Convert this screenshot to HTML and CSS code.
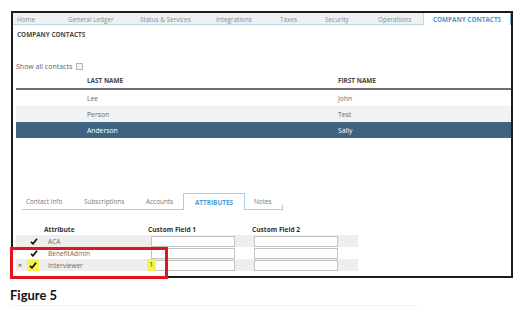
FILE: index.html
```html
<!DOCTYPE html>
<html>
  <head>
    <link rel="stylesheet" href="styles.css">
  </head>
  <body>
    <div class="page">
      <div class="frame">
        <div class="topnav">
          <span class="nav-item">Home</span>
          <span class="nav-item">General Ledger</span>
          <span class="nav-item">Status &amp; Services</span>
          <span class="nav-item">Integrations</span>
          <span class="nav-item">Taxes</span>
          <span class="nav-item">Security</span>
          <span class="nav-item">Operations</span>
          <span class="nav-item active">COMPANY CONTACTS</span>
        </div>

        <div class="page-title">COMPANY CONTACTS</div>

        <label class="show-all">Show all contacts <span class="checkbox"></span></label>

        <div class="contacts">
          <div class="c-row c-head">
            <span></span>
            <span>LAST NAME</span>
            <span>FIRST NAME</span>
          </div>
          <div class="c-row">
            <span></span>
            <span>Lee</span>
            <span>John</span>
          </div>
          <div class="c-row alt">
            <span></span>
            <span>Person</span>
            <span>Test</span>
          </div>
          <div class="c-row selected">
            <span></span>
            <span>Anderson</span>
            <span>Sally</span>
          </div>
        </div>

        <div class="subtabs">
          <span class="subtab w1">Contact Info</span>
          <span class="subtab w2">Subscriptions</span>
          <span class="subtab w3">Accounts</span>
          <span class="subtab active">ATTRIBUTES</span>
          <span class="subtab notes">Notes</span>
        </div>

        <div class="attrs">
          <div class="a-row a-head">
            <span></span>
            <span></span>
            <span class="a-name">Attribute</span>
            <span class="a-field">Custom Field 1</span>
            <span class="a-field">Custom Field 2</span>
          </div>
          <div class="a-row alt">
            <span></span>
            <span class="check"><svg width="8" height="7" viewBox="0 0 8 7"><path d="M1 3.8 L3 5.8 L7 0.8" fill="none" stroke="#111" stroke-width="1.7"/></svg></span>
            <span class="a-name">ACA</span>
            <span class="a-cell"><span class="input"></span></span>
            <span class="a-cell"><span class="input"></span></span>
          </div>
          <div class="a-row">
            <span></span>
            <span class="check"><svg width="8" height="7" viewBox="0 0 8 7"><path d="M1 3.8 L3 5.8 L7 0.8" fill="none" stroke="#111" stroke-width="1.7"/></svg></span>
            <span class="a-name">BenefitAdmin</span>
            <span class="a-cell"><span class="input"></span></span>
            <span class="a-cell"><span class="input"></span></span>
          </div>
          <div class="a-row alt">
            <span class="remove">×</span>
            <span class="check marked"><svg width="8" height="7" viewBox="0 0 8 7"><path d="M1 3.8 L3 5.8 L7 0.8" fill="none" stroke="#111" stroke-width="1.7"/></svg></span>
            <span class="a-name">Interviewer</span>
            <span class="a-cell"><span class="mark-one">1</span><span class="input"></span></span>
            <span class="a-cell"><span class="input"></span></span>
          </div>
        </div>
      </div>

      <div class="callout"></div>

      <div class="caption">Figure 5</div>
      <div class="caption-rule"></div>
    </div>
  </body>
</html>
```

FILE: styles.css
```css
body {
  margin: 0;
  background: #fff;
  font-family: "Open Sans", "Liberation Sans", sans-serif;
  color: #666;
}
.page {
  position: relative;
  padding: 11px 0 0 11px;
  width: 521px;
  height: 305px;
}
.frame {
  box-sizing: border-box;
  width: 502px;
  height: 267px;
  border: 2px solid #1b1b1b;
  font-size: 6.4px;
}

/* top navigation */
.topnav {
  display: grid;
  grid-template-columns: 51px 72px 76px 64px 45px 53px 49px 1fr;
  height: 11px;
  background: #eef1f4;
  border-bottom: 1px solid #bcd6e2;
}
.nav-item {
  display: flex;
  align-items: center;
  padding-left: 4px;
  color: #8a8a8a;
  white-space: nowrap;
}
.nav-item.active {
  justify-content: center;
  padding-left: 0;
  height: 12px;
  background: #fff;
  border-left: 1px solid #bcd6e2;
  border-right: 1px solid #86b3d6;
  color: #4c9ad3;
  font-weight: 700;
}

.page-title {
  padding: 5px 0 0 4px;
  font-weight: 700;
  color: #4a4a4a;
}
.show-all {
  display: flex;
  align-items: center;
  gap: 4px;
  margin: 23px 0 0 3px;
  font-size: 7px;
  color: #666;
}
.checkbox {
  width: 5px;
  height: 5px;
  border: 1px solid #b5b5b5;
  background: #f4f4f4;
}

/* contacts table */
.contacts {
  margin: 3px 0 0 3px;
}
.c-row {
  display: grid;
  grid-template-columns: 71px 251px 1fr;
  align-items: center;
  height: 16px;
  font-size: 6.8px;
  color: #6b6b6b;
}
.c-head {
  height: 12px;
  padding-bottom: 2px;
  border-bottom: 2px solid #707070;
  font-weight: 700;
  color: #444;
  font-size: 6.4px;
}
.c-row.alt {
  background: #f2f2f2;
}
.c-row.selected {
  background: #3e6482;
  color: #fff;
}

/* sub tabs */
.subtabs {
  display: flex;
  width: 261px;
  height: 16px;
  margin: 55px 0 0 9px;
  border-bottom: 1px solid #a9cfe2;
}
.subtab {
  display: flex;
  align-items: center;
  box-sizing: border-box;
  padding-left: 4px;
  color: #777;
}
.w1 { width: 58px; }
.w2 { width: 62px; }
.w3 { width: 41px; }
.subtab.active {
  justify-content: center;
  width: 62px;
  height: 17px;
  padding: 0;
  background: #fff;
  border: 1px solid #a9cfe2;
  border-bottom: none;
  color: #4c9ad3;
  font-weight: 700;
}
.subtab.notes {
  position: relative;
  flex: 1;
  padding-left: 9px;
}
.subtab.notes::after {
  content: "";
  position: absolute;
  right: 0;
  bottom: 0;
  height: 4px;
  border-right: 1px solid #a9cfe2;
}

/* attributes table */
.attrs {
  width: 342px;
  margin: 13px 0 0 3px;
}
.a-row {
  display: grid;
  grid-template-columns: 11px 14px 107px 104px 1fr;
  align-items: center;
  height: 12px;
  color: #6b6b6b;
  font-size: 6.6px;
}
.a-row.alt {
  background: #eeeeee;
}
.a-head {
  font-weight: 700;
  color: #333;
}
.a-head .a-name {
  padding-left: 3px;
}
.a-name {
  padding-left: 7px;
}
.a-cell {
  position: relative;
  display: flex;
  align-items: center;
  height: 12px;
  padding-left: 3px;
}
.a-cell + .a-cell {
  padding-left: 2px;
}
.input {
  box-sizing: border-box;
  width: 84px;
  height: 11px;
  background: #fff;
  border: 1px solid #c4c4c4;
}
.check {
  display: flex;
  align-items: center;
  justify-content: center;
  height: 11px;
}
.check.marked {
  background: #f6f34a;
  width: 12px;
}
.remove {
  padding-left: 2px;
  font-size: 7px;
  color: #444;
}
.mark-one {
  position: absolute;
  left: -1px;
  top: 0;
  width: 9px;
  height: 12px;
  background: #f6f34a;
  color: #333;
  font-size: 6.6px;
  text-align: center;
  line-height: 12px;
}

/* annotation drawn over the screenshot */
.callout {
  position: absolute;
  left: 10px;
  top: 247px;
  width: 158px;
  height: 32px;
  box-sizing: border-box;
  border: 3px solid #e3151c;
}

.caption {
  margin: 9px 0 0 -1px;
  font-family: Lato, "Liberation Sans", sans-serif;
  font-weight: 700;
  font-size: 13px;
  color: #111;
}
.caption-rule {
  width: 408px;
  height: 1px;
  margin-top: 2px;
  background: #f3f3f3;
}
```
